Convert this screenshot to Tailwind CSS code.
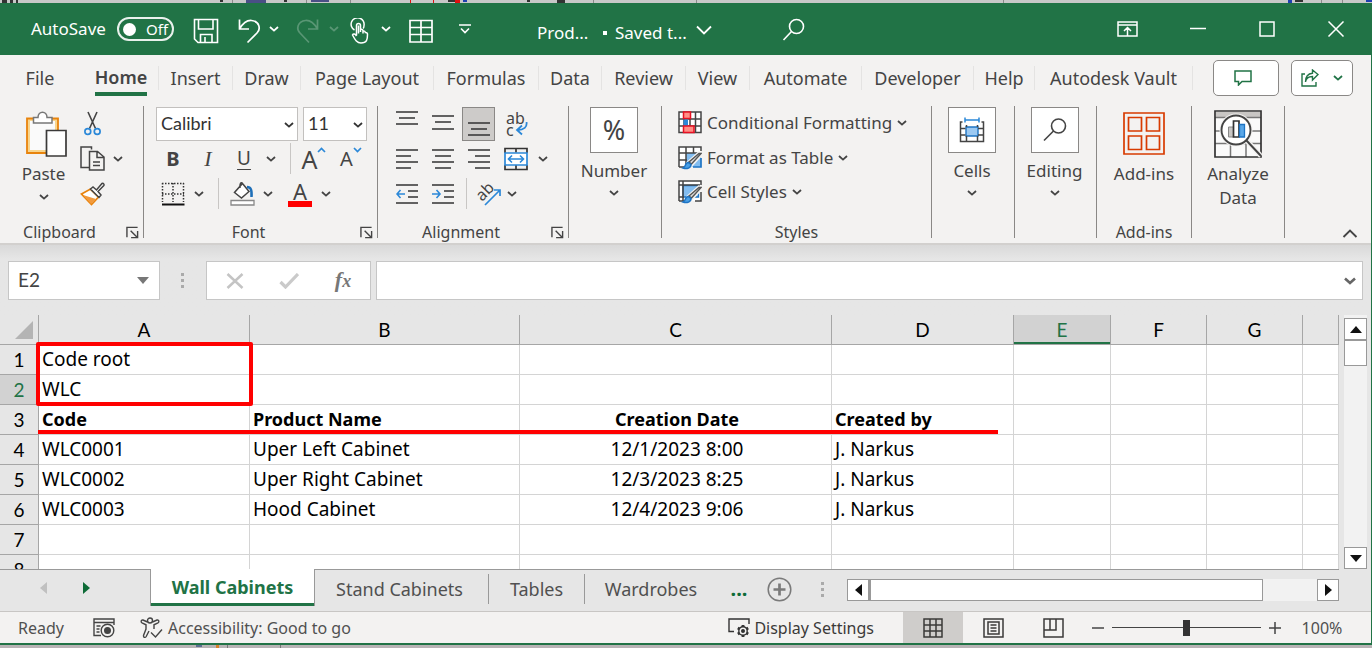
<!DOCTYPE html>
<html lang="en">
<head>
<meta charset="utf-8">
<meta name="viewport" content="width=device-width, initial-scale=1">
<title>Products - Excel</title>
<script src="https://cdn.jsdelivr.net/npm/@tailwindcss/browser@4"></script>
</head>
<body class="flex h-screen flex-col overflow-hidden bg-[#c8c8c8] font-['Noto_Sans',sans-serif] text-[#444444]">

<!-- shared symbols -->
<svg class="hidden" aria-hidden="true">
  <symbol id="chev" viewBox="0 0 10 6"><path d="M1 1l4 3.6L9 1" fill="none" stroke="currentColor" stroke-width="1.8"/></symbol>
  <symbol id="launch" viewBox="0 0 14 14"><path d="M1 12V1.5h11.5M5 5l7 7M12.500 5.500v7h-7" fill="none" stroke="currentColor" stroke-width="1.5"/></symbol>
</svg>

<!-- sliver of the window behind -->
<svg class="h-[3px] w-full shrink-0" viewBox="0 0 1372 3" preserveAspectRatio="none" aria-hidden="true">
  <path fill="#333" d="M2 0h5v3H2zM10 0h3v3h-3zM16 0h2v3h-2zM220 0h3v2h-3zM284 0h3v2h-3zM527 0h3v2h-3zM557 0h8v3h-8zM448 0h12v2h-12zM1295 0h8v2h-8z"/>
  <path fill="#8a8a8a" d="M232 0h1v3h-1zM306 0h1v3h-1zM350 0h1v3h-1zM593 0h1v3h-1zM696 0h1v3h-1zM1003 0h1v3h-1zM1321 0h1v3h-1zM1342 0h1v3h-1z"/>
  <path fill="#4a4f86" d="M246 0h20v3h-20zM311 0h18v2h-18z"/><path fill="#1f3fb0" d="M463 0h4v2h-4zM1288 0h4v3h-4zM1366 0h6v2h-6z"/>
  <path fill="#e01010" d="M410 0h1v3h-1zM433 0h1v3h-1zM455 0h5v3h-5z"/>
</svg>

<div class="flex min-h-0 flex-1 flex-col bg-[#217346]">
  <header class="flex h-[52px] shrink-0 items-center pr-[26px] text-[17px] text-white">
    <label for="autosave" class="ml-[31px] w-[76px] whitespace-nowrap">AutoSave</label>
    <button id="autosave" role="switch" aria-checked="false" class="ml-[10px] flex h-[24px] w-[57px] items-center gap-[10px] rounded-full border-2 border-white/90 pl-[4px] text-[15px] leading-none"><span class="size-[13px] rounded-full bg-white"></span>Off</button>
    <button aria-label="Save" class="ml-[19px] pt-[4px]"><svg class="h-[26px] w-[26px]" viewBox="0 0 26 26" fill="none" stroke="#fff" stroke-width="1.600"><path d="M1.500 1.500h23v23H5l-3.500-3.500zM5.500 1.500v9.500h14.500V1.500M7.500 24.500v-8h11.500v8M12 24.500V19"/></svg></button>
    <button aria-label="Undo" class="ml-[18px] pt-[4px]"><svg class="h-[26px] w-[26px]" viewBox="0 0 26 26" fill="none" stroke="#fff" stroke-width="1.700"><path d="M2.500 1.500v9.500H12M2.500 11c3-5 7-9 12-8.500 8 .8 9.500 8.500 5.500 12.500l-9.500 9.500"/></svg></button>
    <button aria-label="Undo history" class="ml-[6px]"><svg class="h-[6px] w-[10px]"><use href="#chev"/></svg></button>
    <button aria-label="Redo" disabled class="ml-[16px] pt-[4px] opacity-25"><svg class="h-[26px] w-[26px]" viewBox="0 0 26 26" fill="none" stroke="#fff" stroke-width="1.700"><path d="M22.500 1.500v9.500H13M22.500 11c-3-5-7-9-12-8.500-8 .8-9.500 8.500-5.500 12.500l9 9.500"/></svg></button>
    <button aria-label="Redo history" disabled class="ml-[8px] opacity-25"><svg class="h-[6px] w-[10px]"><use href="#chev"/></svg></button>
    <button aria-label="Touch mode" class="ml-[11px] pt-[4px]"><svg class="h-[26px] w-[20px]" viewBox="0 0 20 26" fill="none" stroke="#fff" stroke-width="1.500"><path d="M4.500 12A6.500 6.500 0 1 1 14 7.500c0 1.300-.3 2.200-.8 3M6.500 17.500V7.500a2 2 0 0 1 4 0V14M10.500 11.500c1.500-.5 2.500.2 2.500 1.500 1.500-.3 2.200.5 2.300 1.500 1.700-.2 2.200.8 2.200 2 0 5-.5 8.500-6.500 8.500-4 0-5.500-2.500-8.500-8 .8-1.800 2.800-1 4 1M13 12.500v3M8.500 7.500v8"/></svg></button>
    <button aria-label="Touch mode options" class="ml-[11px]"><svg class="h-[6px] w-[10px]"><use href="#chev"/></svg></button>
    <button aria-label="Table" class="ml-[18px] pt-[4px]"><svg class="h-[24px] w-[24px]" viewBox="0 0 24 24" fill="none" stroke="#fff" stroke-width="1.700"><path d="M1 1.500h22v21.500H1zM1 8.500h22M1 15.500h22M12 1.500v21.500"/></svg></button>
    <button aria-label="Customize toolbar" class="ml-[26px]"><svg class="h-[10px] w-[12px]" viewBox="0 0 12 10" fill="none" stroke="#fff" stroke-width="1.600"><path d="M0 1h12M2 4.500l4 4 4-4"/></svg></button>
    <h1 class="ml-[66px] flex items-center whitespace-nowrap pt-[7px]"><span class="w-[64px]">Prod...</span><span class="mr-[8px] ml-[2px] size-[4px] bg-white"></span><span class="w-[72px]">Saved t...</span></h1>
    <button aria-label="File status" class="ml-[8px] pt-[2px]"><svg class="h-[10px] w-[18px]" viewBox="0 0 18 10" fill="none" stroke="#fff" stroke-width="1.800"><path d="M2 1.500l7 7 7-7"/></svg></button>
    <button aria-label="Search" class="ml-[69px] pt-[2px]"><svg class="h-[24px] w-[24px]" viewBox="0 0 24 24" fill="none" stroke="#fff" stroke-width="1.600"><circle cx="14.500" cy="8.500" r="7"/><path d="M9.500 13.500L1.500 22"/></svg></button>
    <div class="flex flex-1 items-center justify-end">
      <button aria-label="Ribbon display options"><svg class="h-[16px] w-[21px]" viewBox="0 0 21 16" fill="none" stroke="#fff" stroke-width="1.500"><path d="M1 1h19v14H1zM1 4h19M10.500 15V7M7 10l3.500-3.500L14 10"/></svg></button>
      <button aria-label="Minimize" class="ml-[52px]"><svg class="h-[16px] w-[16px]"><path d="M0 7.500h16" stroke="#fff" stroke-width="1.500"/></svg></button>
      <button aria-label="Maximize" class="ml-[53px]"><svg class="h-[16px] w-[16px]" fill="none" stroke="#fff" stroke-width="1.500"><path d="M1 1h14v14H1z"/></svg></button>
      <button aria-label="Close" class="ml-[51px]"><svg class="h-[16px] w-[20px]" viewBox="0 0 20 16" fill="none" stroke="#fff" stroke-width="1.500"><path d="M2.500.5l15 15M17.500.5l-15 15"/></svg></button>
    </div>
  </header>

  <div class="mr-px flex min-h-0 flex-1 flex-col bg-[#f3f2f1]">
    <!-- ribbon tabs -->
    <nav class="flex h-[43px] shrink-0 items-center pt-[3px] pr-[18px] text-[18px] leading-6 whitespace-nowrap" aria-label="Ribbon tabs">
      <button class="w-[80px]">File</button>
      <button class="ml-[4px] h-[38px] w-[74px] font-semibold"><span class="inline-block h-[36px] border-b-4 border-[#217346] pt-[5px]">Home</span></button>
      <button class="w-[74px] border-l border-[#e4e3e2]">Insert</button>
      <button class="w-[68px] border-l border-[#e4e3e2]">Draw</button>
      <button class="w-[133px] border-l border-[#e4e3e2]">Page Layout</button>
      <button class="w-[105px] border-l border-[#e4e3e2]">Formulas</button>
      <button class="w-[63px] border-l border-[#e4e3e2]">Data</button>
      <button class="w-[84px] border-l border-[#e4e3e2]">Review</button>
      <button class="w-[64px] border-l border-[#e4e3e2]">View</button>
      <button class="w-[112px] border-l border-[#e4e3e2]">Automate</button>
      <button class="w-[112px] border-l border-[#e4e3e2]">Developer</button>
      <button class="w-[61px] border-l border-[#e4e3e2]">Help</button>
      <button class="w-[159px] border-x border-[#e4e3e2]">Autodesk Vault</button>
      <div class="flex flex-1 justify-end gap-[12px] text-[#217346]">
        <button aria-label="Comments" class="flex h-[36px] w-[66px] items-center justify-center rounded-[5px] border border-[#8a8886] bg-white pr-[6px]"><svg class="h-[16px] w-[18px]" viewBox="0 0 18 16" fill="none" stroke="#217346" stroke-width="1.500"><path d="M1 1h16v10.500H8L4.500 15v-3.500H1z"/></svg></button>
        <button aria-label="Share" class="flex h-[36px] w-[62px] items-center justify-center gap-[14px] rounded-[5px] border border-[#8a8886] bg-white"><svg class="h-[18px] w-[18px]" viewBox="0 0 18 18" fill="none" stroke="#217346" stroke-width="1.400"><path d="M4 5H1v12h14v-4M4.500 13c.5-4 3-5.500 7-5.500V11L17 5.500 11.500 1v3.200C7 4.500 4.500 8 4.500 13z"/></svg><svg class="h-[6px] w-[10px]"><use href="#chev"/></svg></button>
      </div>
    </nav>

    <!-- ribbon -->
    <div class="flex h-[147px] shrink-0 border-b-2 border-[#d2d0ce] pt-[8px] text-[17px]">
      <section class="flex h-[138px] w-[143px] flex-col" aria-label="Clipboard">
        <div class="flex h-[114px]">
          <button class="flex w-[72px] flex-col items-center pt-[5px] pl-[15px]">
            <svg class="h-[47px] w-[50px] shrink-0" viewBox="-5 0 50 47" fill="none"><path d="M3 7.500h31V42H3z" fill="#f8d58c" stroke="#e8830c" stroke-width="1.800"/><path d="M6 10h25v29H6z" fill="#fafafa"/><path d="M9.500 12V6.500h4.500c0-7 9-7 9 0h5V12z" fill="#fff" stroke="#777" stroke-width="1.500"/><path d="M22.500 19.500H42V45H22.500z" fill="#fff" stroke="#3b3a39" stroke-width="1.700"/></svg>
            <span class="mt-[4px] leading-6">Paste</span>
            <svg class="mt-[8px] h-[6px] w-[10px] shrink-0"><use href="#chev"/></svg>
          </button>
          <div class="ml-[6px] flex flex-col">
            <button aria-label="Cut" class="flex h-[35px] w-[28px] items-center justify-center"><svg class="h-[25px] w-[17px]" viewBox="0 0 17 25" fill="none"><path d="M4 1l7.500 16.500M13 1L5.500 17.500" stroke="#444" stroke-width="1.600"/><circle cx="3.800" cy="20.500" r="2.900" stroke="#2b88d8" stroke-width="1.700"/><circle cx="13.200" cy="20.500" r="2.900" stroke="#2b88d8" stroke-width="1.700"/></svg></button>
            <div class="flex h-[35px] items-center">
              <button aria-label="Copy" class="flex w-[28px] justify-center"><svg class="h-[25px] w-[25px]" viewBox="0 0 25 25" fill="none" stroke="#444" stroke-width="1.500"><path d="M9 21.500H1V1h10.500v2.500M9.500 5.500h8L24 11v13H9.500zM17 5.500V11.500h7M13 16h7M13 19.500h7"/></svg></button>
              <button aria-label="Copy options" class="ml-[7px]"><svg class="h-[6px] w-[10px]"><use href="#chev"/></svg></button>
            </div>
            <button aria-label="Format painter" class="flex h-[35px] w-[28px] items-center justify-center"><svg class="h-[24px] w-[25px]" viewBox="0 0 25 24" fill="none"><path d="M1.500 12l9-5 8 8-7 7.500z" fill="#fff" stroke="#e8830c" stroke-width="1.800"/><path d="M3 13l13 4-5 5z" fill="#f29a3c"/><path d="M10.500 7l2.500-2 3.500 3L22 1.500c1.500-.5 2.500.8 1.800 2L18 9.500l3 3.500-2 2.500z" fill="#fff" stroke="#444" stroke-width="1.500"/></svg></button>
          </div>
        </div>
        <div class="flex h-[24px] items-center text-[16px] leading-5"><span class="flex-1 text-center">Clipboard</span><button aria-label="Clipboard settings" class="w-[24px] pl-[7px]"><svg class="h-[13px] w-[13px]"><use href="#launch"/></svg></button></div>
      </section>
      <div class="h-[132px] w-px bg-[#8a8886]"></div>

      <section class="flex h-[138px] w-[233px] flex-col" aria-label="Font group">
        <div class="h-[114px] pl-[12px]">
          <div class="flex h-[35px] items-center gap-[5px] text-[#333]">
            <div class="relative"><select aria-label="Font" class="h-[34px] w-[142px] appearance-none border border-[#c2c0be] bg-white pl-[4px] font-[Lato,sans-serif] text-[18px]"><option>Calibri</option></select><svg class="pointer-events-none absolute top-[15px] right-[4px] h-[6px] w-[10px]"><use href="#chev"/></svg></div>
            <div class="relative"><select aria-label="Font size" class="h-[34px] w-[64px] appearance-none border border-[#c2c0be] bg-white pl-[4px] font-[Lato,sans-serif] text-[18px]"><option>11</option></select><svg class="pointer-events-none absolute top-[15px] right-[4px] h-[6px] w-[10px]"><use href="#chev"/></svg></div>
          </div>
          <div class="flex h-[35px] items-center">
            <button aria-label="Bold" class="w-[34px] text-[20px] font-bold">B</button>
            <button aria-label="Italic" class="w-[36px] font-['Liberation_Serif',serif] text-[22px] italic">I</button>
            <button aria-label="Underline" class="w-[36px] text-[19px] underline underline-offset-4">U</button>
            <button aria-label="Underline options" class="flex w-[18px] justify-center"><svg class="h-[6px] w-[10px]"><use href="#chev"/></svg></button>
            <div class="mr-[4px] ml-[10px] h-[31px] w-px bg-[#c8c6c4]"></div>
            <button aria-label="Increase font size" class="flex w-[38px] items-start justify-center text-[25px] leading-7">A<svg class="mt-[2px] h-[6px] w-[9px]" viewBox="0 0 9 6" fill="none" stroke="#2b88d8" stroke-width="1.700"><path d="M1 5l3.500-3.500L8 1M1 5l3.500-3.500L8 5" stroke="none"/><path d="M1 5l3.500-3.500L8 5"/></svg></button>
            <button aria-label="Decrease font size" class="flex w-[36px] items-start justify-center text-[20px] leading-6">A<svg class="h-[6px] w-[9px]" viewBox="0 0 9 6" fill="none" stroke="#2b88d8" stroke-width="1.700"><path d="M1 1l3.500 3.500L8 1"/></svg></button>
          </div>
          <div class="flex h-[35px] items-center">
            <button aria-label="Borders" class="flex w-[34px] justify-center"><svg class="h-[24px] w-[24px]" viewBox="0 0 24 24" fill="none" stroke="#333"><path d="M1 1.500h22M1 12h22M1.500 1v19M12 1v19M22.500 1v19" stroke-width="1.500" stroke-dasharray="1.500 1.500"/><path d="M1 22.500h22.500" stroke="#111" stroke-width="2"/></svg></button>
            <button aria-label="Border options" class="flex w-[18px] justify-center"><svg class="h-[6px] w-[10px]"><use href="#chev"/></svg></button>
            <div class="mr-[9px] ml-[10px] h-[31px] w-px bg-[#c8c6c4]"></div>
            <button aria-label="Fill color" class="flex w-[28px] justify-center"><svg class="h-[25px] w-[25px]" viewBox="0 0 25 25" fill="none"><path d="M12.500 2.500l6.500 8L11.500 17 4.500 11.500zM12.500 2.500c-1.500-2-3 0-2.500 4.500" fill="#fff" stroke="#444" stroke-width="1.500"/><path d="M17 6c4 0 5 3 4.500 10" stroke="#1e6fb8" stroke-width="2.500"/><path d="M1 19.500h23v4.500H1z" fill="#fff" stroke="#888" stroke-width="1.300"/></svg></button>
            <button aria-label="Fill color options" class="flex w-[24px] justify-center"><svg class="h-[6px] w-[10px]"><use href="#chev"/></svg></button>
            <button aria-label="Font color" class="flex w-[40px] flex-col items-center text-[22px] leading-5">A<span class="h-[6px] w-[24px] bg-[#ff0000]"></span></button>
            <button aria-label="Font color options" class="flex w-[12px] justify-center"><svg class="h-[6px] w-[10px]"><use href="#chev"/></svg></button>
          </div>
        </div>
        <div class="flex h-[24px] items-center text-[16px] leading-5"><span class="flex-1 text-center">Font</span><button aria-label="Font settings" class="w-[24px] pl-[7px]"><svg class="h-[13px] w-[13px]"><use href="#launch"/></svg></button></div>
      </section>
      <div class="h-[132px] w-px bg-[#8a8886]"></div>

      <section class="flex h-[138px] w-[190px] flex-col" aria-label="Alignment group">
        <div class="h-[114px] pl-[11px]">
          <div class="flex h-[35px] items-center">
            <button aria-label="Top align" class="flex w-[36px] justify-center"><svg class="h-[32px] w-[22px]" stroke="#333" stroke-width="1.600"><path d="M0 4h22M3 10h16M0 16h22"/></svg></button>
            <button aria-label="Middle align" class="flex w-[36px] justify-center"><svg class="h-[32px] w-[22px]" stroke="#333" stroke-width="1.600"><path d="M0 8h22M3 14h16M0 21h22"/></svg></button>
            <button aria-label="Bottom align" aria-pressed="true" class="mr-[2px] ml-px flex h-[34px] w-[33px] items-center justify-center border border-[#8a8886] bg-[#cdcbc9]"><svg class="h-[32px] w-[22px]" stroke="#333" stroke-width="1.600"><path d="M0 15h22M3 21h16M0 27h22"/></svg></button>
            <button aria-label="Wrap text" class="relative w-[38px] pl-[9px] text-left text-[16px] leading-[12px]">ab<br>c<svg class="absolute top-[10px] left-[18px] h-[14px] w-[13px]" viewBox="0 0 13 14" fill="none" stroke="#2b88d8" stroke-width="1.800"><path d="M11.500 0c.8 5-2.500 8-9 8M7 3.500L2 8l5 4.500"/></svg></button>
          </div>
          <div class="flex h-[35px] items-center">
            <button aria-label="Align left" class="flex w-[36px] justify-center"><svg class="h-[22px] w-[22px]" stroke="#333" stroke-width="1.600"><path d="M0 2h22M0 8h15M0 14h22M0 20h15"/></svg></button>
            <button aria-label="Center" class="flex w-[36px] justify-center"><svg class="h-[22px] w-[22px]" stroke="#333" stroke-width="1.600"><path d="M0 2h22M3 8h16M0 14h22M3 20h16"/></svg></button>
            <button aria-label="Align right" class="flex w-[36px] justify-center"><svg class="h-[22px] w-[22px]" stroke="#333" stroke-width="1.600"><path d="M0 2h22M7 8h15M0 14h22M7 20h15"/></svg></button>
            <button aria-label="Merge and center" class="flex w-[38px] justify-center"><svg class="h-[24px] w-[24px]" viewBox="0 0 24 24" fill="none"><path d="M1 6V1.500h22V6M1 18v4.500h22V18M12 1.500v4M12 18v4.500" stroke="#333" stroke-width="1.700"/><path d="M1 6h22v12H1z" fill="#fff" stroke="#2b88d8" stroke-width="1.700"/><path d="M5 12h14M8 8.500L4.500 12 8 15.500M16 8.500l3.500 3.500-3.500 3.500" stroke="#2b88d8" stroke-width="1.600"/></svg></button>
            <button aria-label="Merge options" class="flex w-[16px] justify-center"><svg class="h-[6px] w-[10px]"><use href="#chev"/></svg></button>
          </div>
          <div class="flex h-[35px] items-center">
            <button aria-label="Decrease indent" class="flex w-[36px] justify-center"><svg class="h-[22px] w-[22px]" fill="none" stroke="#333" stroke-width="1.600"><path d="M0 2h22M12 8h10M12 14h10M0 20h22"/><path d="M9 11H1M4.500 7L1 11l3.500 4" stroke="#2b88d8"/></svg></button>
            <button aria-label="Increase indent" class="flex w-[36px] justify-center"><svg class="h-[22px] w-[22px]" fill="none" stroke="#333" stroke-width="1.600"><path d="M0 2h22M12 8h10M12 14h10M0 20h22"/><path d="M0 11h8M4.500 7L8 11l-3.500 4" stroke="#2b88d8"/></svg></button>
            <div class="mr-[9px] ml-[5px] h-[31px] w-px bg-[#c8c6c4]"></div>
            <button aria-label="Orientation" class="relative flex size-[26px]"><span class="absolute top-[2px] left-[-1px] -rotate-45 text-[16px] leading-4">ab</span><svg class="size-[26px]" viewBox="0 0 26 26" fill="none" stroke="#2b88d8" stroke-width="1.700"><path d="M9 24L24 9M18 9h6v6"/></svg></button>
            <button aria-label="Orientation options" class="flex w-[20px] justify-center"><svg class="h-[6px] w-[10px]"><use href="#chev"/></svg></button>
          </div>
        </div>
        <div class="flex h-[24px] items-center text-[16px] leading-5"><span class="flex-1 text-center">Alignment</span><button aria-label="Alignment settings" class="w-[24px] pl-[7px]"><svg class="h-[13px] w-[13px]"><use href="#launch"/></svg></button></div>
      </section>
      <div class="h-[132px] w-px bg-[#8a8886]"></div>

      <button class="flex h-[138px] w-[92px] flex-col items-center pt-px pr-[2px]">
        <span class="flex h-[46px] w-[48px] items-center justify-center border border-[#8a8886] bg-white text-[27px]">%</span>
        <span class="mt-[6px] leading-6">Number</span>
        <svg class="mt-[7px] h-[6px] w-[10px]"><use href="#chev"/></svg>
      </button>
      <div class="h-[132px] w-px bg-[#8a8886]"></div>

      <section class="flex h-[138px] w-[269px] flex-col" aria-label="Styles group">
        <div class="flex h-[114px] flex-col items-start pl-[16px]">
          <button class="flex h-[34px] items-center gap-[5px] whitespace-nowrap"><svg class="size-[24px]" viewBox="0 0 24 24" fill="none"><path d="M1 1h22v20.500H1zM1 8h22M1 15h22M6 1v20.500M12 1v20.500M17.500 1v20.500" fill="#fff" stroke="#444" stroke-width="1.500"/><path d="M5.500 1h7v6.500h-7z" fill="#ff8f86" stroke="#e81123" stroke-width="1.500"/><path d="M5.500 8.500H10V15H5.500z" fill="#2b88d8"/><path d="M5.500 15H16v6.500H5.500z" fill="#ff8f86" stroke="#e81123" stroke-width="1.500"/></svg>Conditional Formatting<svg class="h-[6px] w-[10px]"><use href="#chev"/></svg></button>
          <button class="flex h-[35px] items-center gap-[5px] whitespace-nowrap"><svg class="size-[24px]" viewBox="0 0 24 24" fill="none"><path d="M1 1h22v20H1z" fill="#fff"/><path d="M8 7h15v14H8z" fill="#83bdf0"/><path d="M1 21V1h22v4M1 7h20M1 14h8M8 1v20M15.500 1v6M1 21h6" stroke="#444" stroke-width="1.500"/><path d="M23 12v9h-8" stroke="#1e74c4" stroke-width="1.700"/><path d="M23 8L13.500 18.500l-2.500-2L21 7.500z" fill="#f3f2f1" stroke="#f3f2f1" stroke-width="4"/><path d="M23 7.500L13.500 18l-2.500-2L21 7.500z" fill="#ddd" stroke="#555" stroke-width="1.400"/><path d="M10.500 16.500c-4 0-2 4-5.500 5.500 4 1.500 8 0 8-3.500z" fill="#4aa0e6" stroke="#1e74c4" stroke-width="1.500"/></svg>Format as Table<svg class="h-[6px] w-[10px]"><use href="#chev"/></svg></button>
          <button class="flex h-[34px] items-center gap-[5px] whitespace-nowrap"><svg class="size-[24px]" viewBox="0 0 24 24" fill="none"><path d="M1 1h22v20H1z" fill="#fff"/><path d="M5 5.500h15.500V17H5z" fill="#83bdf0" stroke="#1e74c4" stroke-width="1.400"/><path d="M1 21V1h22v4M1 5h21M5 1v20M1 17h5M1 21h5M23 12v9h-6" stroke="#444" stroke-width="1.500"/><path d="M23 8L13.500 18.500l-2.500-2L21 7.500z" fill="#f3f2f1" stroke="#f3f2f1" stroke-width="4"/><path d="M23 7.500L13.500 18l-2.500-2L21 7.500z" fill="#ddd" stroke="#555" stroke-width="1.400"/><path d="M10.500 16.500c-4 0-2 4-5.500 5.500 4 1.500 8 0 8-3.500z" fill="#4aa0e6" stroke="#1e74c4" stroke-width="1.500"/></svg>Cell Styles<svg class="h-[6px] w-[10px]"><use href="#chev"/></svg></button>
        </div>
        <div class="h-[24px] text-center text-[16px] leading-6">Styles</div>
      </section>
      <div class="h-[132px] w-px bg-[#8a8886]"></div>

      <button class="flex h-[138px] w-[82px] flex-col items-center pt-px pr-[2px]">
        <span class="flex h-[46px] w-[48px] items-center justify-center border border-[#8a8886] bg-white"><svg class="h-[26px] w-[26px]" viewBox="0 0 26 26" fill="none"><path d="M7 10h12v9H7z" fill="#9cc9f2" stroke="#1e74c4" stroke-width="1.400"/><path d="M3.500 5H1.500v19.500h23V5h-2M1.500 11.500h5M19 11.500h5M1.500 18h5M19 18h5M7.500 8v2M7.500 19v5M18.500 8v2M18.500 19v5" stroke="#444" stroke-width="1.500"/><path d="M6 3h14M6 .5v5M20 .5v5" stroke="#2b88d8" stroke-width="1.500"/></svg></span>
        <span class="mt-[6px] leading-6">Cells</span>
        <svg class="mt-[7px] h-[6px] w-[10px]"><use href="#chev"/></svg>
      </button>
      <div class="h-[132px] w-px bg-[#8a8886]"></div>

      <button class="flex h-[138px] w-[81px] flex-col items-center pt-px pr-[2px]">
        <span class="flex h-[46px] w-[48px] items-center justify-center border border-[#8a8886] bg-white"><svg class="h-[24px] w-[24px]" viewBox="0 0 24 24" fill="none" stroke="#444" stroke-width="1.600"><circle cx="15.500" cy="8" r="7"/><path d="M10.500 13L1 22.500"/></svg></span>
        <span class="mt-[6px] leading-6">Editing</span>
        <svg class="mt-[7px] h-[6px] w-[10px]"><use href="#chev"/></svg>
      </button>
      <div class="h-[132px] w-px bg-[#8a8886]"></div>

      <section class="flex h-[138px] w-[94px] flex-col items-center" aria-label="Add-ins group">
        <button class="flex h-[114px] flex-col items-center pt-[6px]"><svg class="h-[43px] w-[42px]" viewBox="0 0 42 43" fill="none" stroke="#d83b01" stroke-width="1.700"><path d="M1 1h40v41H1zM5.500 5.500H18.500V19H5.500zM23.500 5.500h13V19h-13zM5.500 24H18.500V37.500H5.500zM23.500 24h13V37.500h-13z"/></svg><span class="mt-[7px] leading-6">Add-ins</span></button>
        <div class="h-[24px] text-center text-[16px] leading-6">Add-ins</div>
      </section>
      <div class="h-[132px] w-px bg-[#8a8886]"></div>

      <button class="flex h-[138px] w-[92px] flex-col items-center pt-[4px]">
        <svg class="h-[48px] w-[48px] shrink-0" viewBox="0 0 48 48" fill="none"><path d="M1 1h46v46H1z" fill="#fafafa"/><path d="M2 2h44v5H2z" fill="#c8c6c4"/><path d="M1 7.500h46M1 21h46M1 33.500h46M16.500 33v14M32 33v14" stroke="#777" stroke-width="1.500"/><path d="M1 1h46v46H1z" stroke="#333" stroke-width="1.700"/><circle cx="22" cy="20" r="16.500" fill="#f3f2f1"/><circle cx="22" cy="20" r="14.500" fill="#fff" stroke="#444" stroke-width="1.900"/><path d="M14.500 17h5v10h-5z" fill="#c8c6c4" stroke="#888"/><path d="M19.500 11h5.500v16h-5.500z" fill="#fff" stroke="#333" stroke-width="1.700"/><path d="M25.500 14.500h5V27h-5z" fill="#5aa7e8" stroke="#1e74c4" stroke-width="1.300"/><path d="M33.500 31.500L47 46" stroke="#f3f2f1" stroke-width="5"/><path d="M32.500 30.500L47 46" stroke="#444" stroke-width="2"/></svg>
        <span class="mt-[4px] leading-6">Analyze<br>Data</span>
      </button>
      <div class="h-[132px] w-px bg-[#8a8886]"></div>
      <div class="flex flex-1 items-end justify-end pr-[13px] pb-[5px]"><button aria-label="Collapse ribbon"><svg class="h-[9px] w-[16px]" viewBox="0 0 16 9" fill="none" stroke="#444" stroke-width="1.900"><path d="M1.500 8L8 1.500 14.500 8"/></svg></button></div>
    </div>

    <!-- formula bar -->
    <div class="flex h-[70px] shrink-0 items-start bg-linear-to-b from-[#d9d9d9] to-[#e6e6e6] to-20% pt-[16px] pr-[8px] pl-[8px]">
      <div class="flex h-[39px] w-[152px] items-center border border-[#c6c6c6] bg-white"><input aria-label="Name box" value="E2" class="w-[120px] pl-[9px] font-[Lato,sans-serif] text-[19px] text-[#444] outline-none"><button aria-label="Name box list" class="ml-[8px]"><svg class="h-[7px] w-[12px]"><path d="M0 0h12L6 7z" fill="#777"/></svg></button></div>
      <svg class="mx-[20px] mt-[11px] h-[17px] w-[6px]" fill="#aaa" aria-hidden="true"><path d="M1 1h3v3H1zM1 7h3v3H1zM1 13h3v3H1z"/></svg>
      <div class="flex h-[39px] w-[165px] items-center border border-[#c6c6c6] bg-white">
        <button aria-label="Cancel" class="flex w-[55px] justify-center"><svg class="h-[16px] w-[18px]" fill="none" stroke="#c4c4c4" stroke-width="2.500"><path d="M1.500 1l15 14M16.500 1l-15 14"/></svg></button>
        <button aria-label="Enter" class="flex w-[54px] justify-center"><svg class="h-[16px] w-[20px]" fill="none" stroke="#cacaca" stroke-width="3.200"><path d="M1.500 9l5 5L19 1"/></svg></button>
        <button aria-label="Insert function" class="flex w-[54px] items-baseline justify-center font-['Liberation_Serif',serif] text-[22px] font-bold text-[#777] italic leading-6">f<span class="text-[18px]">x</span></button>
      </div>
      <div class="ml-[5px] flex h-[39px] flex-1 items-center border border-[#c6c6c6] bg-white pr-[6px]"><input aria-label="Formula bar" class="min-w-0 flex-1 px-2 outline-none"><button aria-label="Expand formula bar"><svg class="h-[8px] w-[12px]" viewBox="0 0 12 8" fill="none" stroke="#666" stroke-width="2.600"><path d="M1 1.500l5 4.500 5-4.500"/></svg></button></div>
    </div>

    <!-- grid -->
    <div class="flex min-h-0 flex-1 bg-[#e6e6e6]">
      <div class="relative min-w-0 flex-1 overflow-hidden">
        <table class="w-full table-fixed border-separate border-spacing-0 text-[19px] leading-[29px] text-black [&_tbody_td]:h-[30px] [&_tbody_td]:overflow-hidden [&_tbody_td]:border-r [&_tbody_td]:border-b [&_tbody_td]:border-[#d4d4d4] [&_tbody_td]:bg-white [&_tbody_td]:py-0 [&_tbody_td]:pr-0 [&_tbody_td]:pl-[3px] [&_tbody_td]:whitespace-nowrap [&_th]:font-[Lato,sans-serif] [&_tbody_th]:h-[30px] [&_tbody_th]:border-r [&_tbody_th]:border-b [&_tbody_th]:border-[#a6a6a6] [&_tbody_th]:p-0 [&_tbody_th]:font-normal [&_thead_th]:h-[30px] [&_thead_th]:border-r [&_thead_th]:border-b [&_thead_th]:border-[#a6a6a6] [&_thead_th]:p-0 [&_thead_th]:font-normal">
          <colgroup><col class="w-[39px]"><col class="w-[211px]"><col class="w-[270px]"><col class="w-[312px]"><col class="w-[182px]"><col class="w-[97px]"><col class="w-[96px]"><col class="w-[96px]"><col></colgroup>
          <thead><tr><th scope="col"><svg class="ml-[15px] h-[18px] w-[18px]"><path d="M18 0v18H0z" fill="#b4b4b4"/></svg></th><th scope="col">A</th><th scope="col">B</th><th scope="col">C</th><th scope="col">D</th><th scope="col" class="bg-[#d2d2d2] text-[#217346] shadow-[inset_0_-2px_0_#217346]">E</th><th scope="col">F</th><th scope="col">G</th><th></th></tr></thead>
          <tbody>
            <tr><th scope="row">1</th><td>Code root</td><td></td><td></td><td></td><td></td><td></td><td></td><td></td></tr>
            <tr><th scope="row" class="bg-[#d2d2d2] text-[#217346]">2</th><td>WLC</td><td></td><td></td><td></td><td></td><td></td><td></td><td></td></tr>
            <tr class="[&_td]:text-[18px] [&_td]:font-bold"><th scope="row">3</th><td>Code</td><td>Product Name</td><td class="text-center">Creation Date</td><td>Created by</td><td></td><td></td><td></td><td></td></tr>
            <tr><th scope="row">4</th><td>WLC0001</td><td>Uper Left Cabinet</td><td class="text-center">12/1/2023 8:00</td><td>J. Narkus</td><td></td><td></td><td></td><td></td></tr>
            <tr><th scope="row">5</th><td>WLC0002</td><td>Uper Right Cabinet</td><td class="text-center">12/3/2023 8:25</td><td>J. Narkus</td><td></td><td></td><td></td><td></td></tr>
            <tr><th scope="row">6</th><td>WLC0003</td><td>Hood Cabinet</td><td class="text-center">12/4/2023 9:06</td><td>J. Narkus</td><td></td><td></td><td></td><td></td></tr>
            <tr><th scope="row">7</th><td></td><td></td><td></td><td></td><td></td><td></td><td></td><td></td></tr>
            <tr><th scope="row">8</th><td></td><td></td><td></td><td></td><td></td><td></td><td></td><td></td></tr>
          </tbody>
        </table>
        <!-- red annotations over the cells -->
        <div class="pointer-events-none absolute top-[27px] left-[36px] h-[64px] w-[217px] rounded-[2px] border-4 border-[#ff0000]"></div>
        <div class="pointer-events-none absolute top-[115px] left-[38px] h-[4px] w-[960px] bg-[#ff0000]"></div>
      </div>
      <div class="mr-[4px] ml-[5px] flex w-[23px] flex-col bg-[#f2f2f2] pt-[3px]">
        <button aria-label="Scroll up" class="flex h-[22px] items-center justify-center border border-[#999] bg-white"><svg class="h-[7px] w-[12px]"><path d="M0 7h12L6 0z" fill="#111"/></svg></button>
        <div class="h-[26px] border border-[#999] bg-white"></div>
        <button aria-label="Scroll down" class="mt-auto flex h-[22px] items-center justify-center border border-[#999] bg-white"><svg class="h-[7px] w-[12px]"><path d="M0 0h12L6 7z" fill="#111"/></svg></button>
      </div>
    </div>

    <!-- sheet tabs -->
    <div class="flex h-[42px] shrink-0 items-start bg-[#e6e6e6] pr-[32px] text-[18px] text-[#505050]">
      <div class="flex h-[37px] w-[151px] items-center border-t border-r border-[#999] pl-[40px]">
        <button aria-label="Previous sheet" disabled><svg class="h-[12px] w-[7px]"><path d="M7 0v12L0 6z" fill="#c0c0c0"/></svg></button>
        <button aria-label="Next sheet" class="ml-[36px]"><svg class="h-[12px] w-[7px]"><path d="M0 0v12l7-6z" fill="#0e6b37"/></svg></button>
      </div>
      <div class="h-[37px] w-[164px] border-r border-[#999]"><button class="h-[37px] w-full border-b-[3px] border-[#217346] bg-white pt-[3px] font-bold text-[#217346]">Wall Cabinets</button></div>
      <div class="flex h-[42px] flex-1 items-start border-t border-[#999]">
        <button class="mt-[4px] h-[30px] w-[174px] border-r border-[#999] pr-[4px]">Stand Cabinets</button>
        <button class="mt-[4px] h-[30px] w-[96px] border-r border-[#999]">Tables</button>
        <button class="mt-[4px] h-[30px] w-[132px]">Wardrobes</button>
        <button aria-label="More sheets" class="mt-[4px] h-[30px] w-[44px] text-[20px] font-bold text-[#0e6b37]">...</button>
        <button aria-label="New sheet" class="mt-[7px] ml-[6px]"><svg class="size-[25px]" viewBox="0 0 25 25" fill="none" stroke="#7a7a7a"><circle cx="12.500" cy="12.500" r="11.300" stroke-width="1.500"/><path d="M12.500 6.500v12M6.500 12.500h12" stroke-width="2.700"/></svg></button>
        <svg class="mt-[12px] ml-[29px] h-[17px] w-[4px]" fill="#aaa" aria-hidden="true"><path d="M0 0h3v3H0zM0 6h3v3H0zM0 12h3v3H0z"/></svg>
        <div class="mt-[9px] ml-[22px] flex h-[22px] flex-1 bg-[#f2f2f2]">
          <button aria-label="Scroll left" class="flex w-[22px] items-center justify-center border border-[#999] bg-white"><svg class="h-[12px] w-[7px]"><path d="M7 0v12L0 6z" fill="#111"/></svg></button>
          <div class="mr-[54px] flex-1 border border-l-2 border-[#999] bg-white"></div>
          <button aria-label="Scroll right" class="flex w-[22px] items-center justify-center border border-[#999] bg-white"><svg class="h-[12px] w-[7px]"><path d="M0 0v12l7-6z" fill="#111"/></svg></button>
        </div>
      </div>
    </div>

    <!-- status bar -->
    <footer class="flex h-[32px] shrink-0 items-center border-t border-[#c8c6c4] pr-[28px] text-[16px] whitespace-nowrap text-[#505050]">
      <span class="ml-[18px] w-[75px]">Ready</span>
      <button aria-label="Record macro"><svg class="h-[20px] w-[22px]" viewBox="0 0 22 20" fill="none" stroke="#444" stroke-width="1.400"><path d="M8 17.500H1V1h20v6M1 4.500h20M3.500 8h4M3.500 11h3M3.500 14h3"/><circle cx="14.500" cy="12.500" r="6.300"/><circle cx="14.500" cy="12.500" r="2.800" fill="#444"/></svg></button>
      <button class="ml-[25px] flex items-center gap-[5px]"><svg class="h-[22px] w-[23px]" viewBox="0 0 23 22" fill="none" stroke="#444" stroke-width="1.400"><circle cx="10" cy="3.500" r="2.500"/><path d="M7.500 5L3 3C1 2.500.5 5 2 5.800l4 2V12l-2.500 6.500c-.3 2 1.800 2.500 2.700 1L9 14M12.500 5L17 3c2-.5 2.500 2 1 2.800l-4 2V12M11 15.500l4.500 4.500L22 12.500"/></svg>Accessibility: Good to go</button>
      <div class="flex flex-1 items-center justify-end">
        <button class="flex items-center gap-[4px] pr-[29px] text-[#3b3a39]"><svg class="h-[20px] w-[22px]" viewBox="0 0 22 20" fill="none" stroke="#333" stroke-width="1.400"><path d="M6 13.500H1V1h20v5"/><circle cx="15" cy="13" r="4.200"/><circle cx="15" cy="13" r="1.300" fill="#333"/><path d="M15 7v2M15 17v2M9.800 10l1.800 1M18.500 15l1.700 1M9.800 16l1.800-1M18.500 11l1.700-1" stroke-width="2.800"/></svg>Display Settings</button>
        <button aria-label="Normal view" aria-pressed="true" class="flex h-[31px] w-[60px] items-center justify-center bg-[#cfcdcb]"><svg class="size-[20px]" viewBox="0 0 20 20" fill="none" stroke="#3b3a39" stroke-width="1.500"><path d="M1 1h18v18H1zM1 7h18M1 13h18M7 1v18M13 1v18"/></svg></button>
        <button aria-label="Page layout view" class="flex h-[31px] w-[60px] items-center justify-center"><svg class="h-[20px] w-[21px]" viewBox="0 0 21 20" fill="none" stroke="#3b3a39" stroke-width="1.500"><path d="M1 1h19v18H1zM5 4h11v12H5zM7.500 7h6M7.500 10h6M7.500 13h6"/></svg></button>
        <button aria-label="Page break view" class="flex h-[31px] w-[60px] items-center justify-center"><svg class="h-[20px] w-[21px]" viewBox="0 0 21 20" fill="none" stroke="#3b3a39" stroke-width="1.500"><path d="M1 1h19v18H1zM1 12h12V1M7 1v11"/></svg></button>
        <button aria-label="Zoom out" class="ml-[9px]"><svg class="h-[12px] w-[12px]"><path d="M0 6h12" stroke="#444" stroke-width="1.500"/></svg></button>
        <input type="range" aria-label="Zoom" min="0" max="100" value="50" class="mx-[8px] h-[16px] w-[149px] appearance-none bg-[linear-gradient(#444,#444)] bg-[length:100%_1px] bg-center bg-no-repeat [&::-webkit-slider-thumb]:h-[16px] [&::-webkit-slider-thumb]:w-[7px] [&::-webkit-slider-thumb]:appearance-none [&::-webkit-slider-thumb]:bg-[#333]">
        <button aria-label="Zoom in"><svg class="h-[12px] w-[12px]"><path d="M0 6h12M6 0v12" stroke="#444" stroke-width="1.500"/></svg></button>
        <button class="ml-[20px] w-[42px]">100%</button>
      </div>
    </footer>
  </div>
  <div class="h-[2px] shrink-0 bg-[#217346]"></div>
</div>
<svg class="h-[3px] w-full shrink-0 bg-[#b8b3b5]" viewBox="0 0 1372 3" preserveAspectRatio="none" aria-hidden="true"><path fill="#5d6f93" d="M196 0h6v2h-6z"/><path fill="#d9822b" d="M216 0h3v3h-3z"/><path fill="#777" d="M227 0h1v3h-1zM280 0h1v3h-1z"/></svg>
</body>
</html>
